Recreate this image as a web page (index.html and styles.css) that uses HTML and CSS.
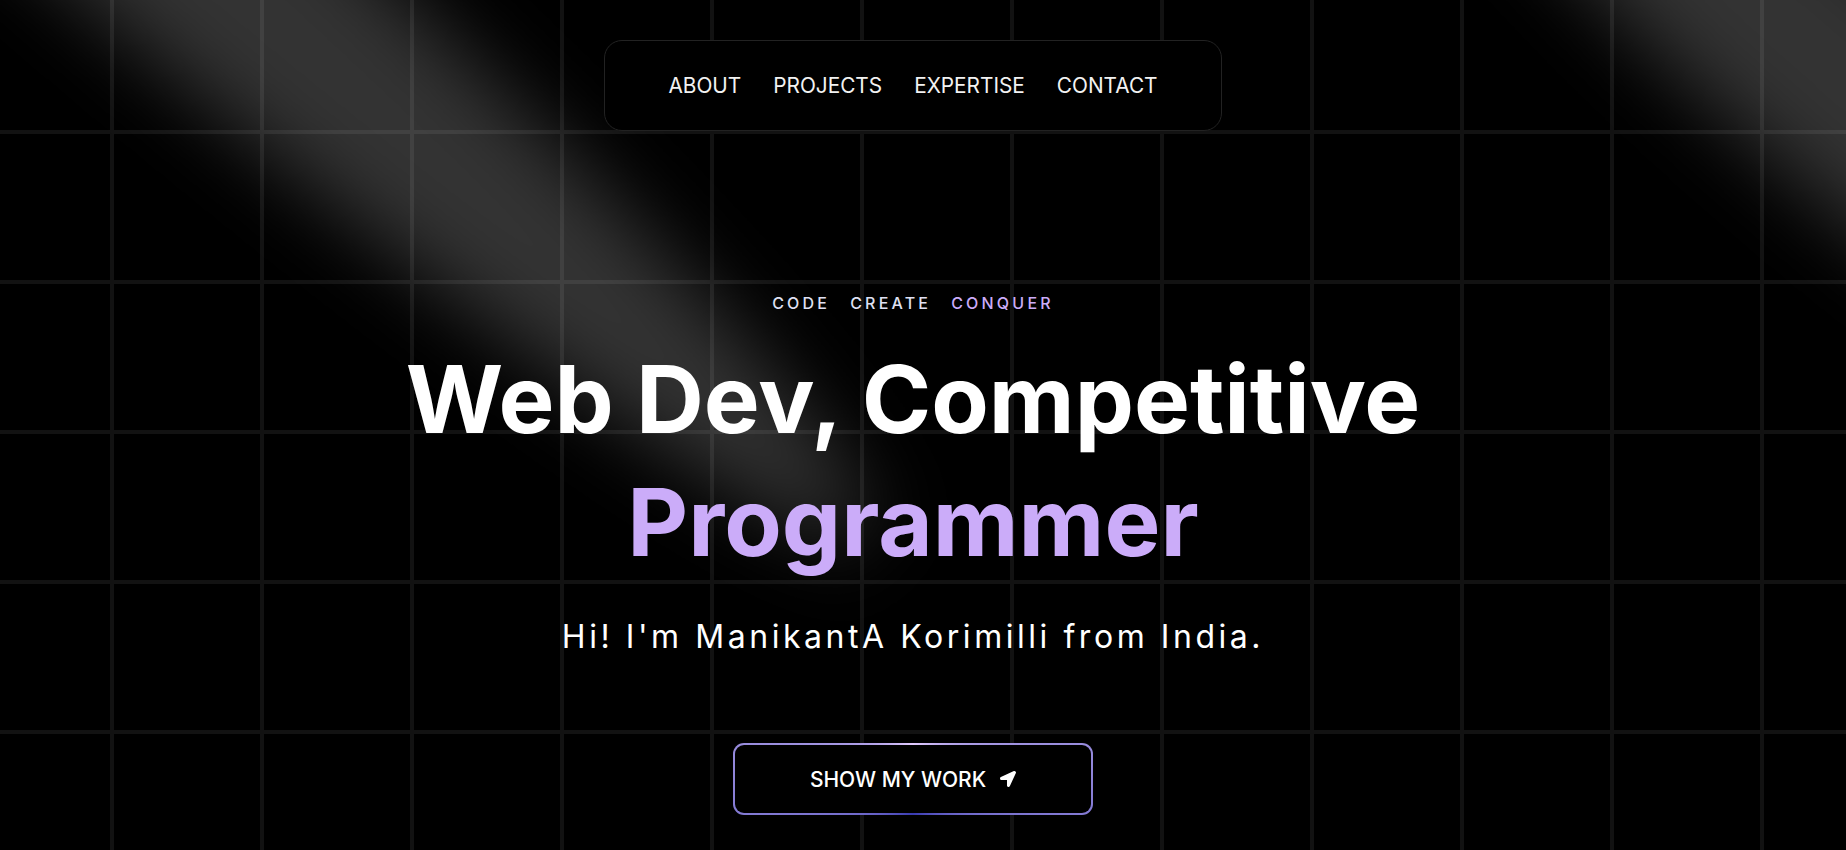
FILE: index.html
```html
<!DOCTYPE html>
<html lang="en">
<head>
<meta charset="utf-8">
<title>ManikantA Korimilli</title>
<link rel="stylesheet" href="styles.css">
</head>
<body>
<div class="page">
  <div class="spotlight spotlight-left"></div>
  <div class="spotlight spotlight-right"></div>
  <div class="content">
    <nav class="nav">
      <a class="nav-link" href="#about">ABOUT</a>
      <a class="nav-link" href="#projects">PROJECTS</a>
      <a class="nav-link" href="#expertise">EXPERTISE</a>
      <a class="nav-link" href="#contact">CONTACT</a>
    </nav>
    <section class="hero">
      <p class="tagline"><span>CODE</span><span>CREATE</span><span class="accent">CONQUER</span></p>
      <h1 class="title">Web Dev, Competitive<br><span class="accent">Programmer</span></h1>
      <p class="intro">Hi! I'm ManikantA Korimilli from India.</p>
      <a class="cta" href="#projects">
        <span class="cta-inner">SHOW MY WORK
          <svg class="cta-icon" viewBox="0 0 512 512" aria-hidden="true"><path d="M444.52 3.52L28.74 195.42c-47.97 22.39-31.98 92.75 19.19 92.75h175.91v175.91c0 51.17 70.36 67.17 92.75 19.19l191.9-415.78c15.99-38.39-25.59-79.97-63.97-63.97z"/></svg>
        </span>
      </a>
    </section>
  </div>
</div>
</body>
</html>
```

FILE: styles.css
```css
html, body {
  margin: 0;
  padding: 0;
  height: 100%;
  overflow: hidden;
  background: #000;
}

body {
  font-family: "Inter", "Noto Sans", sans-serif;
  color: #fff;
}

.page {
  position: relative;
  height: 100vh;
  overflow: hidden;
  background-color: #000;
  background-image:
    linear-gradient(to right, #121212 4px, transparent 4px),
    linear-gradient(to bottom, #121212 4px, transparent 4px);
  background-size: 150px 150px;
  background-position: 110px 130px;
}

.spotlight {
  position: absolute;
  width: 2000px;
  height: 220px;
  border-radius: 50%;
  background: rgba(255, 255, 255, 0.2);
  filter: blur(40px);
  transform: rotate(41deg);
  pointer-events: none;
  z-index: 1;
}

.spotlight-left {
  width: 2100px;
  left: -975px;
  top: -262px;
}

.spotlight-right {
  width: 1200px;
  left: 1246px;
  top: -33px;
}

.content {
  position: relative;
  z-index: 2;
  display: flex;
  flex-direction: column;
  align-items: center;
  padding-right: 20px;
}

.nav {
  margin-top: 40px;
  box-sizing: border-box;
  height: 91px;
  padding: 0 63px;
  display: flex;
  align-items: center;
  gap: 32px;
  background: #000;
  border: 1px solid #222;
  border-radius: 18px;
}

.nav-link {
  color: #f2f2f2;
  text-decoration: none;
  font-size: 20.8px;
  font-weight: 400;
  line-height: 24px;
}

.hero {
  display: flex;
  flex-direction: column;
  align-items: center;
  text-align: center;
}

.tagline {
  margin: 160px 0 0;
  display: flex;
  gap: 20px;
  font-size: 16px;
  line-height: 24px;
  font-weight: 500;
  letter-spacing: 0.2em;
  color: #dfe0f3;
}

.accent {
  color: #cbacf9;
}

.title {
  margin: 23px 0 0;
  font-size: 94px;
  line-height: 123px;
  font-weight: 700;
  letter-spacing: 0;
  color: #fff;
}

.intro {
  margin: 33px 0 0;
  font-size: 32px;
  line-height: 40px;
  font-weight: 400;
  letter-spacing: 3.55px;
  color: #fff;
}

.cta {
  margin-top: 86px;
  display: inline-flex;
  width: 360px;
  height: 72px;
  box-sizing: border-box;
  padding: 2px;
  border-radius: 11px;
  background: conic-gradient(from 0deg at 50% 50%, #e2cbff 0%, #393bb2 50%, #e2cbff 100%);
  text-decoration: none;
}

.cta-inner {
  flex: 1;
  display: flex;
  align-items: center;
  justify-content: center;
  gap: 14px;
  border-radius: 9px;
  background: #000;
  color: #fff;
  font-size: 21px;
  font-weight: 500;
}

.cta-icon {
  width: 16px;
  height: 16px;
  fill: #fff;
}
```
